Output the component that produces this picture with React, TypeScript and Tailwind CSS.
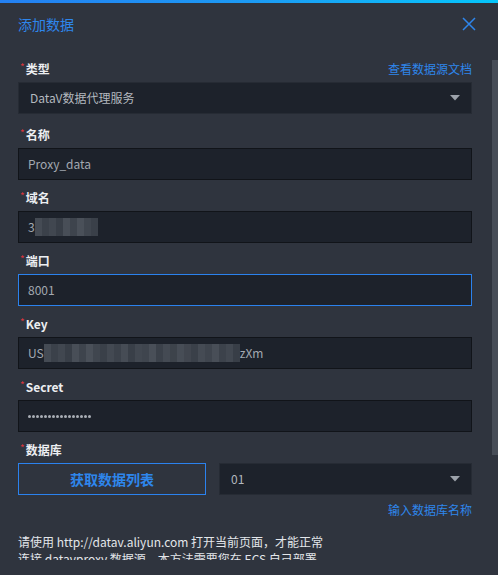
import React from 'react';

const FONT = { fontFamily: '"Noto Sans CJK SC", "Noto Sans", sans-serif' };

const domainBlur = [
  'bg-[#4a5059]', 'bg-[#3f454e]', 'bg-[#464c55]', 'bg-[#3c424b]', 'bg-[#4d535c]',
  'bg-[#424851]', 'bg-[#4f555e]', 'bg-[#444a53]', 'bg-[#3e444d]',
];

const keyBlur = [
  'bg-[#4a5059]', 'bg-[#3f454e]', 'bg-[#464c55]', 'bg-[#3c424b]', 'bg-[#4d535c]',
  'bg-[#424851]', 'bg-[#4f555e]', 'bg-[#444a53]', 'bg-[#3e444d]', 'bg-[#484e57]',
  'bg-[#40464f]', 'bg-[#4b515a]', 'bg-[#3d434c]', 'bg-[#474d56]', 'bg-[#434952]',
  'bg-[#4e545d]', 'bg-[#3f454e]', 'bg-[#494f58]', 'bg-[#41474f]', 'bg-[#4c525b]',
  'bg-[#454b54]', 'bg-[#3e444d]', 'bg-[#4a5059]', 'bg-[#434952]', 'bg-[#4d535c]',
  'bg-[#40464f]', 'bg-[#474d56]', 'bg-[#3c424b]',
];

function Mosaic({ cells }: { cells: string[] }) {
  return (
    <span className="inline-flex h-[18px] opacity-90">
      {cells.map((c, i) => (
        <span key={i} className={`w-[7px] h-full ${c}`} />
      ))}
    </span>
  );
}

function Label({ children, right }: { children: React.ReactNode; right?: React.ReactNode }) {
  return (
    <div className="flex items-center justify-between h-[18px]">
      <div className="flex items-start">
        <span className="text-[#d9363e] text-[10px] leading-[10px] mt-[2px] mr-[1px] ml-[2px]">*</span>
        <span className="text-[12px] leading-[18px] font-semibold text-[#eceef1]">{children}</span>
      </div>
      {right}
    </div>
  );
}

function Caret() {
  return (
    <svg width="10" height="6" viewBox="0 0 10 6" className="shrink-0">
      <path d="M0 0 L10 0 L5 5.5 Z" fill="#9ca2aa" />
    </svg>
  );
}

function Select({ value }: { value: string }) {
  return (
    <div className="h-[32px] flex items-center justify-between bg-[#1d222b] border border-[#262b34] pl-[11px] pr-[11px]">
      <span className="text-[12px] leading-[16px] text-[#b3b8bf]">{value}</span>
      <Caret />
    </div>
  );
}

function Input({ children, focused }: { children: React.ReactNode; focused?: boolean }) {
  return (
    <div
      className={`h-[32px] flex items-center bg-[#1d222b] border pl-[9px] text-[12px] leading-[16px] text-[#a3a9b1] ${
        focused ? 'border-[#2b82ee]' : 'border-[#111419]'
      }`}
    >
      {children}
    </div>
  );
}

export default function App() {
  return (
    <div className="w-[498px] h-[575px] bg-[#2f343e] flex flex-col overflow-hidden" style={FONT}>
      <div className="h-[3px] bg-gradient-to-r from-[#2480f2] via-[#1c9af4] to-[#04c6fb]" />

      {/* header */}
      <div className="h-[45px] flex items-center justify-between pl-[18px] pr-[22px] pb-[4px] shrink-0">
        <span className="text-[14px] leading-[20px] text-[#2e86ec]">添加数据</span>
        <svg width="14" height="14" viewBox="0 0 14 14">
          <path d="M1 1 L13 13 M13 1 L1 13" stroke="#2e86ec" strokeWidth="1.5" />
        </svg>
      </div>

      {/* body */}
      <div className="flex h-[512px] shrink-0">
        <div className="flex-1 overflow-hidden pl-[18px] pr-[20px] pt-[12px]">
          <div className="mb-[12px]">
            <Label right={<span className="text-[12px] leading-[18px] text-[#2e86ec]">查看数据源文档</span>}>类型</Label>
            <div className="mt-[4px]">
              <Select value="DataV数据代理服务" />
            </div>
          </div>

          <div className="mb-[9px]">
            <Label>名称</Label>
            <div className="mt-[4px]">
              <Input>Proxy_data</Input>
            </div>
          </div>

          <div className="mb-[9px]">
            <Label>域名</Label>
            <div className="mt-[4px]">
              <Input>
                <span>3</span>
                <Mosaic cells={domainBlur} />
              </Input>
            </div>
          </div>

          <div className="mb-[9px]">
            <Label>端口</Label>
            <div className="mt-[4px]">
              <Input focused>8001</Input>
            </div>
          </div>

          <div className="mb-[9px]">
            <Label>Key</Label>
            <div className="mt-[4px]">
              <Input>
                <span>US</span>
                <Mosaic cells={keyBlur} />
                <span>zXm</span>
              </Input>
            </div>
          </div>

          <div className="mb-[9px]">
            <Label>Secret</Label>
            <div className="mt-[4px]">
              <Input>
                <span className="flex gap-[1px]">
                  {Array.from({ length: 16 }).map((_, i) => (
                    <span key={i} className="w-[3px] h-[3px] rounded-full bg-[#a9aeb5]" />
                  ))}
                </span>
              </Input>
            </div>
          </div>

          <div>
            <Label>数据库</Label>
            <div className="mt-[4px] flex gap-[13px]">
              <button className="w-[188px] h-[32px] border border-[#2b82ee] text-[14px] font-bold text-[#2e86ec] leading-[20px]">
                获取数据列表
              </button>
              <div className="flex-1">
                <Select value="01" />
              </div>
            </div>
            <div className="mt-[6px] flex justify-end">
              <span className="text-[12px] leading-[18px] text-[#2e86ec]">输入数据库名称</span>
            </div>
          </div>

          <p className="mt-[14px] text-[12px] leading-[17px] text-[#e3e6ea]">
            请使用 http://datav.aliyun.com 打开当前页面，才能正常
            <br />
            连接 datavproxy 数据源，本方法需要您在 ECS 自己部署
          </p>
        </div>

        {/* scrollbar */}
        <div className="w-[6px] pt-[12px]">
          <div className="h-[395px] bg-[#474d57]" />
        </div>
      </div>
    </div>
  );
}
